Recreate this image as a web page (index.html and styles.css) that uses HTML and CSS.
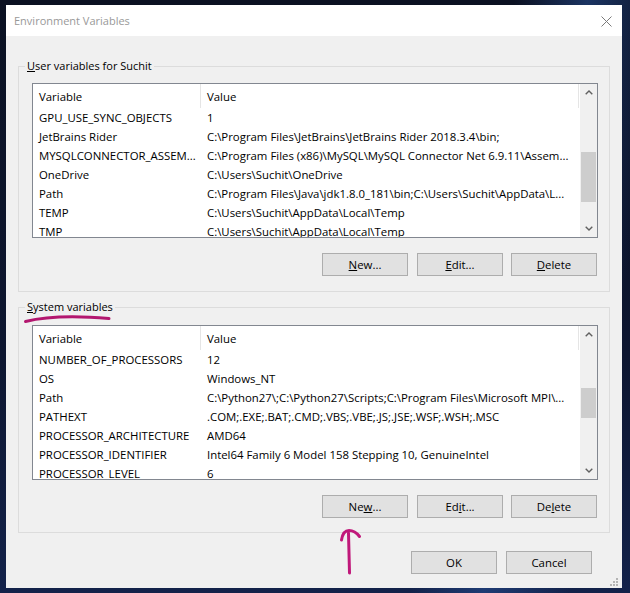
FILE: index.html
```html
<!DOCTYPE html>
<html>
<head>
<meta charset="utf-8">
<link rel="stylesheet" href="styles.css">
</head>
<body>
<div class="desktop">
  <div class="window">
    <div class="titlebar">
      <span class="title">Environment Variables</span>
      <svg class="close" width="11" height="11" viewBox="0 0 11 11"><path d="M0.5 0.5 L10.5 10.5 M10.5 0.5 L0.5 10.5" stroke="#7a7a7a" stroke-width="1" fill="none"/></svg>
    </div>
    <div class="content">
      <div class="group">
        <div class="group-title"><u>U</u>ser variables for Suchit</div>
        <div class="list">
          <div class="list-main">
            <div class="row head"><div class="c1">Variable</div><div class="c2">Value</div></div>
            <div class="row"><div class="c1">GPU_USE_SYNC_OBJECTS</div><div class="c2">1</div></div>
            <div class="row"><div class="c1">JetBrains Rider</div><div class="c2">C:\Program Files\JetBrains\JetBrains Rider 2018.3.4\bin;</div></div>
            <div class="row"><div class="c1">MYSQLCONNECTOR_ASSEM...</div><div class="c2">C:\Program Files (x86)\MySQL\MySQL Connector Net 6.9.11\Assem...</div></div>
            <div class="row"><div class="c1">OneDrive</div><div class="c2">C:\Users\Suchit\OneDrive</div></div>
            <div class="row"><div class="c1">Path</div><div class="c2">C:\Program Files\Java\jdk1.8.0_181\bin;C:\Users\Suchit\AppData\L...</div></div>
            <div class="row"><div class="c1">TEMP</div><div class="c2">C:\Users\Suchit\AppData\Local\Temp</div></div>
            <div class="row"><div class="c1">TMP</div><div class="c2">C:\Users\Suchit\AppData\Local\Temp</div></div>
          </div>
          <div class="scrollbar">
            <div class="sb-btn"><svg width="8" height="5" viewBox="0 0 8 5"><path d="M0.7 4.3 L4 1 L7.3 4.3" stroke="#606060" stroke-width="1.4" fill="none"/></svg></div>
            <div class="sb-track"><div class="thumb" style="margin-top:51px;height:50px"></div></div>
            <div class="sb-btn"><svg width="8" height="5" viewBox="0 0 8 5"><path d="M0.7 0.7 L4 4 L7.3 0.7" stroke="#606060" stroke-width="1.4" fill="none"/></svg></div>
          </div>
        </div>
        <div class="btn-row">
          <button class="btn"><u>N</u>ew...</button>
          <button class="btn"><u>E</u>dit...</button>
          <button class="btn"><u>D</u>elete</button>
        </div>
      </div>

      <div class="group group-system">
        <div class="group-title"><u>S</u>ystem variables</div>
        <div class="list list-system">
          <div class="list-main">
            <div class="row head"><div class="c1">Variable</div><div class="c2">Value</div></div>
            <div class="row"><div class="c1">NUMBER_OF_PROCESSORS</div><div class="c2">12</div></div>
            <div class="row"><div class="c1">OS</div><div class="c2">Windows_NT</div></div>
            <div class="row"><div class="c1">Path</div><div class="c2">C:\Python27\;C:\Python27\Scripts;C:\Program Files\Microsoft MPI\...</div></div>
            <div class="row"><div class="c1">PATHEXT</div><div class="c2">.COM;.EXE;.BAT;.CMD;.VBS;.VBE;.JS;.JSE;.WSF;.WSH;.MSC</div></div>
            <div class="row"><div class="c1">PROCESSOR_ARCHITECTURE</div><div class="c2">AMD64</div></div>
            <div class="row"><div class="c1">PROCESSOR_IDENTIFIER</div><div class="c2">Intel64 Family 6 Model 158 Stepping 10, GenuineIntel</div></div>
            <div class="row"><div class="c1">PROCESSOR_LEVEL</div><div class="c2">6</div></div>
          </div>
          <div class="scrollbar">
            <div class="sb-btn"><svg width="8" height="5" viewBox="0 0 8 5"><path d="M0.7 4.3 L4 1 L7.3 4.3" stroke="#606060" stroke-width="1.4" fill="none"/></svg></div>
            <div class="sb-track"><div class="thumb" style="margin-top:45px;height:30px"></div></div>
            <div class="sb-btn"><svg width="8" height="5" viewBox="0 0 8 5"><path d="M0.7 0.7 L4 4 L7.3 0.7" stroke="#606060" stroke-width="1.4" fill="none"/></svg></div>
          </div>
        </div>
        <div class="btn-row">
          <button class="btn">Ne<u>w</u>...</button>
          <button class="btn">Ed<u>i</u>t...</button>
          <button class="btn">De<u>l</u>ete</button>
        </div>
      </div>

      <div class="footer">
        <button class="btn">OK</button>
        <button class="btn">Cancel</button>
      </div>
    </div>
    <svg class="grip" width="8" height="8" viewBox="0 0 8 8">
      <rect x="6" y="0" width="2" height="2" fill="#b4b4b4"/>
      <rect x="3" y="3" width="2" height="2" fill="#b4b4b4"/>
      <rect x="6" y="3" width="2" height="2" fill="#b4b4b4"/>
      <rect x="0" y="6" width="2" height="2" fill="#b4b4b4"/>
      <rect x="3" y="6" width="2" height="2" fill="#b4b4b4"/>
      <rect x="6" y="6" width="2" height="2" fill="#b4b4b4"/>
    </svg>
  </div>
  <svg class="annot" width="630" height="593" viewBox="0 0 630 593">
    <path d="M25.5 321.5 Q 56 314 109 318.5" stroke="#b3176f" stroke-width="3" fill="none" stroke-linecap="round"/>
    <path d="M349.5 573 L348.5 533" stroke="#c0187a" stroke-width="3" fill="none" stroke-linecap="round"/>
    <path d="M341.5 540 Q 343 530.5 349 530.5 Q 355 530.5 359.5 536.5" stroke="#c0187a" stroke-width="3" fill="none" stroke-linecap="round"/>
  </svg>
</div>
</body>
</html>
```
FILE: styles.css
```css
* { box-sizing: border-box; }
html, body {
  margin: 0;
  padding: 0;
}
body {
  width: 630px;
  height: 593px;
  overflow: hidden;
  background: #0a1020;
  font-family: "Open Sans", "Noto Sans", sans-serif;
  font-size: 11px;
  color: #000;
}
.desktop {
  position: relative;
  width: 630px;
  height: 593px;
  padding: 5px 0 0 6px;
  background:
    linear-gradient(100deg, rgba(0,0,0,0) 70%, rgba(40,80,150,0.55) 80%, rgba(0,0,0,0) 92%),
    linear-gradient(180deg, #0b1122 0%, #0d1630 60%, #13224a 100%);
}
.window {
  position: relative;
  width: 616px;
  height: 583px;
  display: flex;
  flex-direction: column;
  background: #f0f0f0;
}
.titlebar {
  height: 31px;
  flex: none;
  background: #fff;
  display: flex;
  align-items: center;
  justify-content: space-between;
  padding: 0 10px 0 8px;
}
.title {
  color: #999;
  font-size: 11px;
}
.close { display: block; margin-top: 1px; }
.content {
  flex: 1;
  padding: 0 12px;
}
.group {
  margin-top: 30px;
  border: 1px solid #dcdcdc;
  padding: 0 11px 15px 13px;
}
.group-system {
  margin-top: 15px;
  padding-bottom: 14px;
}
.group-title {
  width: fit-content;
  height: 16px;
  line-height: 16px;
  margin: -9px 0 0 -7px;
  padding: 0 2px;
  background: #f0f0f0;
  white-space: nowrap;
}
u { text-decoration-thickness: 1px; text-underline-offset: 1px; }
.list {
  margin-top: 9px;
  height: 155px;
  border: 1px solid #828790;
  background: #fff;
  display: flex;
  font-size: 11.4px;
}
.list-system { margin-top: 10px; }
.list-main {
  flex: 1;
  overflow: hidden;
  min-width: 0;
}
.row {
  display: flex;
  height: 19px;
  align-items: center;
  white-space: nowrap;
}
.row.head { height: 24px; }
.c1 {
  width: 168px;
  flex: none;
  padding-left: 6px;
  overflow: hidden;
}
.c2 {
  flex: 1;
  padding-left: 6px;
  overflow: hidden;
  min-width: 0;
}
.head .c1, .head .c2 {
  height: 100%;
  display: flex;
  align-items: center;
  border-right: 1px solid #e5e5e5;
}
.head .c2 { margin-right: 1px; }
.scrollbar {
  width: 17px;
  flex: none;
  background: #f0f0f0;
  display: flex;
  flex-direction: column;
}
.sb-btn {
  height: 17px;
  flex: none;
  display: flex;
  align-items: center;
  justify-content: center;
}
.sb-btn svg { display: block; }
.sb-track { flex: 1; }
.thumb {
  margin: 0 1px;
  background: #cdcdcd;
}
.btn-row {
  margin-top: 15px;
  display: flex;
  justify-content: flex-end;
  gap: 8px;
  padding-right: 1px;
}
.btn-row .btn:first-child { margin-right: 1px; }
.btn {
  width: 86px;
  height: 23px;
  padding: 0;
  margin: 0;
  background: #e1e1e1;
  border: 1px solid #adadad;
  font-family: "Open Sans", "Noto Sans", sans-serif;
  font-size: 11.4px;
  color: #000;
  line-height: 20px;
}
.footer {
  margin-top: 18px;
  display: flex;
  justify-content: flex-end;
  gap: 9px;
  padding-right: 18px;
}
.grip {
  position: absolute;
  right: 4px;
  bottom: 2px;
}
.annot {
  position: absolute;
  left: 0;
  top: 0;
  pointer-events: none;
}
```
